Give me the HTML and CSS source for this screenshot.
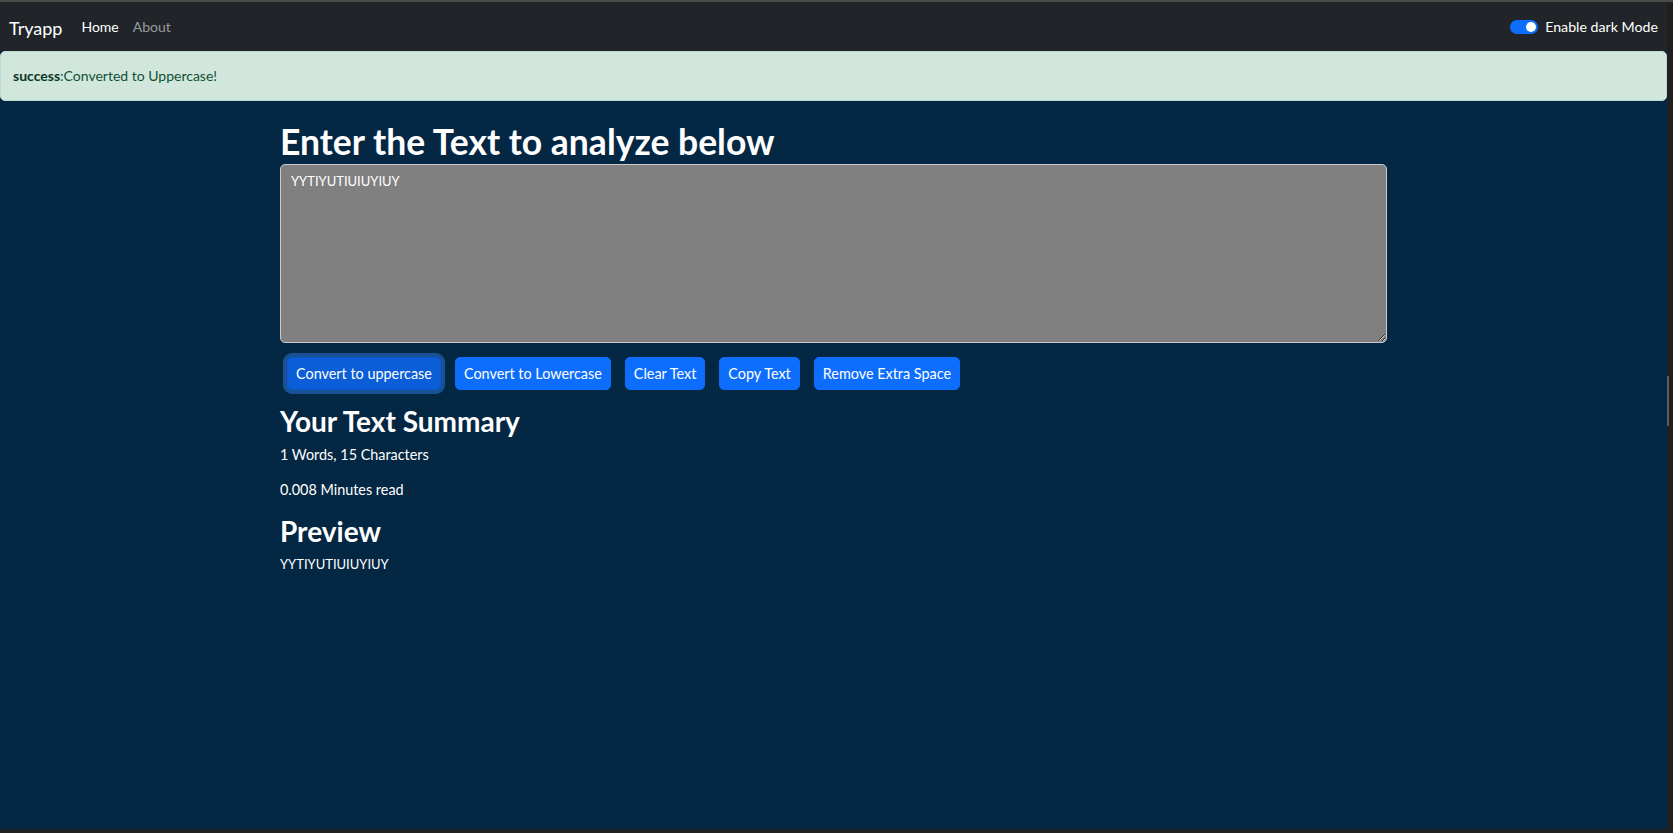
FILE: index.html
```html
<!DOCTYPE html>
<html lang="en">
<head>
<meta charset="utf-8">
<title>Tryapp</title>
<link rel="stylesheet" href="styles.css">
</head>
<body>
<div class="window">
  <div class="viewport">
    <nav class="navbar">
      <a class="brand" href="#">Tryapp</a>
      <ul class="nav-links">
        <li><a class="nav-link active" href="#">Home</a></li>
        <li><a class="nav-link" href="#">About</a></li>
      </ul>
      <label class="switch">
        <span class="switch-track"><span class="switch-knob"></span></span>
        <span class="switch-label">Enable dark Mode</span>
      </label>
    </nav>
    <div class="alert"><strong>success</strong>:Converted to Uppercase!</div>
    <main class="container">
      <h1 class="title">Enter the Text to analyze below</h1>
      <textarea class="text-input" rows="8">YYTIYUTIUIUYIUY</textarea>
      <div class="actions">
        <button class="btn btn-focus">Convert to uppercase</button>
        <button class="btn">Convert to Lowercase</button>
        <button class="btn">Clear Text</button>
        <button class="btn">Copy Text</button>
        <button class="btn">Remove Extra Space</button>
      </div>
      <h2 class="section-title">Your Text Summary</h2>
      <p class="info">1 Words, 15 Characters</p>
      <p class="info info-gap">0.008 Minutes read</p>
      <h2 class="section-title">Preview</h2>
      <p class="info preview">YYTIYUTIUIUYIUY</p>
    </main>
  </div>
  <div class="scrollbar"><div class="thumb"></div></div>
</div>
<div class="bottom-bar"></div>
</body>
</html>
```

FILE: styles.css
```css
* { box-sizing: border-box; }

html, body {
  margin: 0;
  height: 833px;
  overflow: hidden;
}

body {
  display: flex;
  flex-direction: column;
  border-top: 2px solid #4b4b4b;
  font-family: "Lato", "Segoe UI", "Noto Sans", sans-serif;
  font-size: 14.4px;
  color: #fff;
  background: #1f1f1f;
}

.window {
  flex: 1;
  display: flex;
  min-height: 0;
}

.viewport {
  flex: 1;
  background: #042743;
  display: flex;
  flex-direction: column;
}

.scrollbar {
  width: 6px;
  background: #1f1f1f;
}

.thumb {
  margin-top: 374px;
  width: 2px;
  height: 50px;
  background: #5c5c5c;
}

.bottom-bar {
  height: 4px;
  background: #1f1f1f;
}

/* navbar */
.navbar {
  height: 49px;
  background: #212529;
  display: flex;
  align-items: center;
  padding: 0 9px 0 9px;
}

.brand {
  color: #fff;
  text-decoration: none;
  font-size: 18px;
  margin-right: 19px;
  padding-top: 2px;
}

.nav-links {
  list-style: none;
  display: flex;
  gap: 14px;
  margin: 0;
  padding: 0;
}

.nav-link {
  color: rgba(255,255,255,.55);
  text-decoration: none;
  font-size: 14px;
}

.nav-link.active { color: #fff; }

.switch {
  margin-left: auto;
  display: flex;
  align-items: center;
  gap: 7px;
}

.switch-track {
  width: 28px;
  height: 14px;
  border-radius: 7px;
  background: #0d6efd;
  display: flex;
  align-items: center;
  justify-content: flex-end;
  padding-right: 2px;
}

.switch-knob {
  width: 10px;
  height: 10px;
  border-radius: 50%;
  background: #fff;
}

.switch-label {
  font-size: 14.2px;
  color: #fff;
}

/* alert */
.alert {
  height: 50px;
  background: #d1e7dd;
  border: 1px solid #badbcc;
  border-radius: 5px;
  color: #0f5132;
  padding: 13px 12px 0;
  font-size: 14px;
  line-height: 21.6px;
}

.alert strong { color: #0a3622; font-weight: 700; }

/* main */
.container {
  width: 1107px;
  margin: 0 auto;
  padding-top: 19px;
}

.title {
  margin: 0;
  font-size: 35.5px;
  line-height: 44px;
  font-weight: 700;
}

.text-input {
  display: block;
  width: 100%;
  height: 179px;
  margin: 0;
  background: #808080;
  color: #fff;
  border: 1px solid #c8cbcf;
  border-radius: 5px;
  padding: 6px 10px;
  font-family: inherit;
  font-size: 13px;
  line-height: 20px;
  resize: vertical;
}

.actions {
  display: flex;
  gap: 14px;
  margin: 14px 0 0 7px;
}

.btn {
  height: 33px;
  padding: 0 8px;
  border: 1px solid #0d6efd;
  border-radius: 5px;
  background: #0d6efd;
  color: #fff;
  font-family: inherit;
  font-size: 14.4px;
}

.btn-focus {
  background: #0b5ed7;
  border-color: #0a58ca;
  box-shadow: 0 0 0 4px rgba(49,132,253,.45);
}

.section-title {
  margin: 14px 0 0;
  font-size: 28px;
  line-height: 34px;
  font-weight: 700;
}

.info {
  margin: 6px 0 0;
  line-height: 21.6px;
}

.info-gap { margin-top: 13px; }

.preview { font-size: 13px; }
```
